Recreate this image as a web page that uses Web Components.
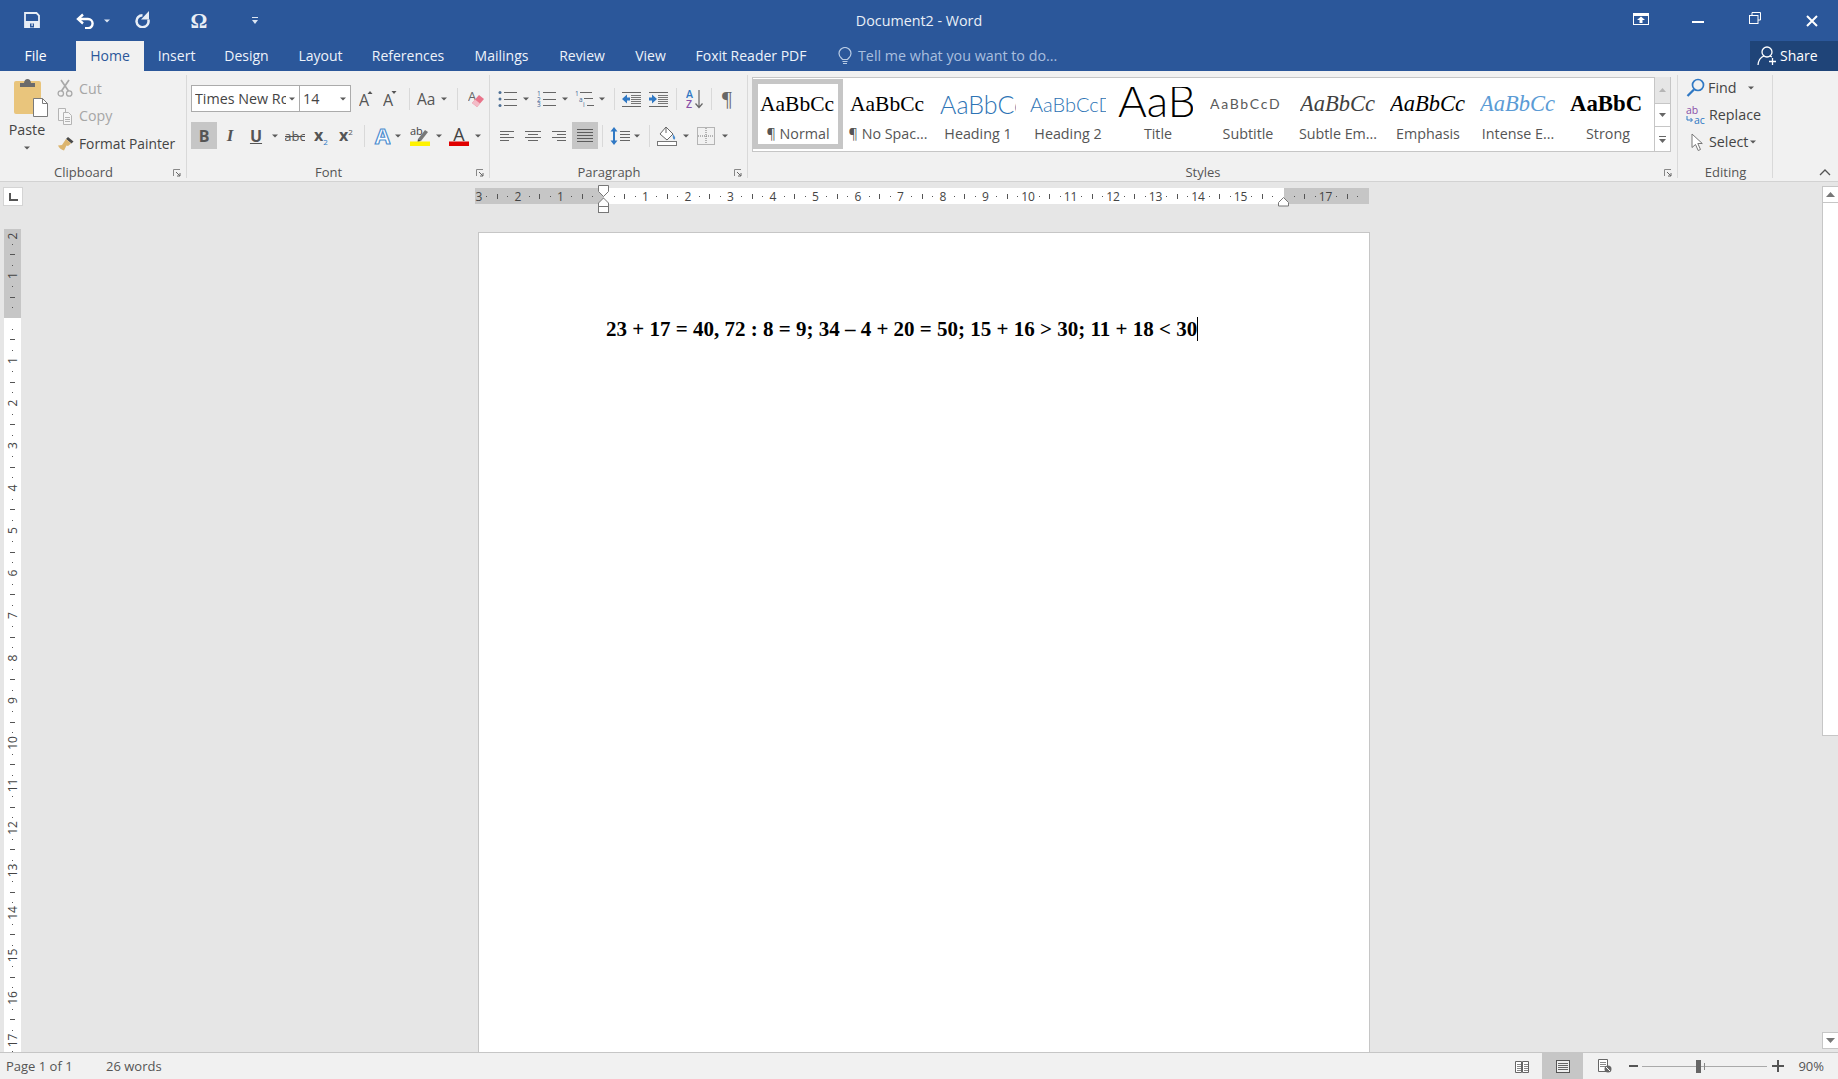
<!DOCTYPE html>
<html lang="en">
<head>
<meta charset="utf-8">
<title>Document2 - Word</title>
<style>
html, body { margin: 0; height: 100%; overflow: hidden; background: #e6e6e6; }
body { font-family: "Open Sans", "Liberation Sans", sans-serif; font-size: 13px; color: #444; }
</style>
</head>
<body>
<word-app>
  <word-titlebar slot="top"></word-titlebar>
  <word-tabs slot="top"></word-tabs>
  <word-ribbon slot="top"></word-ribbon>
  <word-workspace>
    <word-page>23 + 17 = 40, 72 : 8 = 9; 34 – 4 + 20 = 50; 15 + 16 &gt; 30; 11 + 18 &lt; 30</word-page>
  </word-workspace>
  <word-statusbar slot="bottom"></word-statusbar>
</word-app>

<script>
const SERIF = "'Liberation Serif', serif";
const SANS = "'Open Sans', 'Liberation Sans', sans-serif";
const lines = (x1, x2, ys, c) => ys.map(y => `<rect x="${x1}" y="${y}" width="${x2 - x1}" height="1" fill="${c}"/>`).join('');
const SANS_ATTR = `font-family="${SANS}"`;

// name: [width, height, svg markup], drawn 1:1 in px
const ICONS = {
  caret: [6, 4, '<path d="M0 0.5h6L3 3.5z" fill="#5a5a5a"/>'],
  caretw: [6, 4, '<path d="M0 0.5h6L3 3.5z" fill="#dce6f3"/>'],
  save: [16, 16, '<path d="M1 1h11.500L15 3.500V15H1z" fill="none" stroke="#e8eef6" stroke-width="1.800"/><rect x="1" y="9" width="14" height="6.500" fill="#e8eef6"/><rect x="6" y="11.500" width="4" height="4" fill="#2b579a"/><rect x="7.500" y="11.500" width="1.200" height="2.500" fill="#e8eef6"/>'],
  undo: [19, 16, '<path d="M7 1.500L2 6l5 4.500" fill="none" stroke="#fff" stroke-width="2.400"/><path d="M2.500 6h9.500a4.600 4.600 0 0 1 0 9.200H9" fill="none" stroke="#fff" stroke-width="2.400"/>'],
  redo: [17, 17, '<path d="M8.500 4.200a6 6 0 1 0 5.800 4.300" fill="none" stroke="#e8eef6" stroke-width="2.500"/><path d="M15 0v8.500H7z" fill="#e8eef6"/>'],
  qat: [6, 8, '<rect width="6" height="1" fill="#dce6f3"/><path d="M0 3h6L3 7z" fill="#dce6f3"/>'],
  ribbonopt: [16, 12, '<rect x=".5" y=".5" width="15" height="11" fill="none" stroke="#fff"/><rect x="1" y="1" width="14" height="2" fill="#fff"/><path d="M8 3.500l4 3.500H9.500v3h-3V7H4z" fill="#fff"/>'],
  minimize: [12, 2, '<rect width="12" height="2" fill="#fff"/>'],
  restore: [12, 12, '<path d="M3 3V.5h8.500V8H9" fill="none" stroke="#fff"/><rect x=".5" y="3.500" width="8.500" height="8" fill="none" stroke="#fff"/>'],
  close: [12, 12, '<path d="M1 1l10 10M11 1L1 11" stroke="#fff" stroke-width="2"/>'],
  bulb: [14, 18, '<path d="M4.500 12.500C3 10.500 1 9.500 1 6.500a6 6 0 0 1 12 0c0 3-2 4-3.500 6z" fill="none" stroke="#b8cbe4" stroke-width="1.200"/><path d="M4.500 14.500h5M5 16.500h4" stroke="#b8cbe4" stroke-width="1.200"/>'],
  share: [20, 20, '<circle cx="10" cy="6" r="5" fill="none" stroke="#fff" stroke-width="1.300"/><path d="M1 19c.5-5 3-8 6-9M13 10l2 1" fill="none" stroke="#fff" stroke-width="1.300"/><path d="M12 15.500h7M15.500 12v7" stroke="#fff" stroke-width="1.300"/>'],
  paste: [34, 39, '<rect y="3" width="27" height="33" rx="2" fill="#e9c57c"/><path d="M6 9V5h4q.5-4 3.500-4T17 5h4v4z" fill="#6b6b6b"/><path d="M19.500 20.500h9l5 5v13h-14z" fill="#fff" stroke="#7a7a7a"/><path d="M28.500 20.500v5h5" fill="none" stroke="#7a7a7a"/>'],
  cut: [16, 18, '<path d="M4 1l7.500 11M12 1L4.500 12" stroke="#a9a9a9" stroke-width="1.700"/><circle cx="3.800" cy="14.500" r="2.700" fill="none" stroke="#a9a9a9" stroke-width="1.300"/><circle cx="12.200" cy="14.500" r="2.700" fill="none" stroke="#a9a9a9" stroke-width="1.300"/>'],
  copy: [16, 18, '<path d="M1.500 1.500h7v12h-7z" fill="#f6f6f6" stroke="#b4b4b4"/><path d="M6.500 5.500h5l3 3v9h-8z" fill="#f6f6f6" stroke="#b4b4b4"/>' + lines(8, 13, [10, 12, 14], '#b4b4b4')],
  painter: [18, 16, '<path d="M11 2l5.500 4.500-2 2-5.500-4.500z" fill="#4a4a4a"/><path d="M9 4l5 4.500-3 2.500-1.500-.5L7 15.500C4.500 15 2 13 1 10.500l4-.5 1-1.500z" fill="#dcb56e"/>'],
  grow: [15, 17, `<text x="0" y="16" ${SANS_ATTR} font-size="16" fill="#555">A</text><path d="M8.500 4L11 1l2.500 3z" fill="#555"/>`],
  shrink: [15, 17, `<text x="0" y="16" ${SANS_ATTR} font-size="16" fill="#555">A</text><path d="M8.500 1h5L11 4z" fill="#555"/>`],
  eraser: [17, 18, `<text x="0" y="11" ${SANS_ATTR} font-size="13" fill="#666">A</text><path d="M4 13l7-8 5 4-7 8z" fill="#e9748a"/><path d="M4 13l3-3.500 5 4L9 17z" fill="#f3bcc7"/>`],
  strike: [20, 12, `<text x="10" y="11" text-anchor="middle" ${SANS_ATTR} font-size="13" fill="#555">abc</text><rect y="6" width="20" height="1" fill="#555"/>`],
  effect: [17, 20, `<text x="8.500" y="18" text-anchor="middle" ${SANS_ATTR} font-size="22" font-weight="700" fill="#fff" stroke="#4f8fd0" stroke-width="1.200">A</text>`],
  highlight: [20, 20, `<text x="0" y="9" ${SANS_ATTR} font-size="11" fill="#444">ab</text><path d="M8 13l7-9 3 2-7 9z" fill="#777"/><path d="M8 13l3 2-3.500 1z" fill="#444"/><rect y="15.500" width="20" height="4.500" fill="#fff200"/>`],
  fontcolor: [20, 20, `<text x="10" y="15" text-anchor="middle" ${SANS_ATTR} font-size="18" fill="#444">A</text><rect y="15.500" width="20" height="4.500" fill="#e00000"/>`],
  bullets: [19, 16, '<g shape-rendering="crispEdges">' + lines(6, 19, [1, 8, 14], '#666') + '</g><circle cx="2" cy="1.500" r="1.500" fill="#4f7196"/><circle cx="2" cy="8" r="1.500" fill="#4f7196"/><circle cx="2" cy="14.500" r="1.500" fill="#4f7196"/>'],
  numbering: [19, 16, `<g shape-rendering="crispEdges">${lines(6, 19, [1, 8, 14], '#666')}</g><g ${SANS_ATTR} font-size="6.500" fill="#3d6796"><text x="0" y="5">1</text><text x="0" y="11">2</text><text x="0" y="16">3</text></g>`],
  multilevel: [20, 16, `<g shape-rendering="crispEdges">${lines(5, 17, [1], '#666')}${lines(9, 18, [7], '#666')}${lines(12, 19, [14], '#666')}</g><g ${SANS_ATTR} font-size="6.500" fill="#3d6796"><text x="0" y="5">1</text><text x="4" y="11">a</text><text x="8" y="16">i</text></g>`],
  outdent: [19, 16, '<g shape-rendering="crispEdges">' + lines(0, 19, [1, 15], '#666') + lines(9, 19, [4, 6, 8, 10, 12], '#777') + '</g><path d="M0 8l5-4.500V6.500h3v3H5v3z" fill="#2f78c4"/>'],
  indent: [19, 16, '<g shape-rendering="crispEdges">' + lines(0, 19, [1, 15], '#666') + lines(9, 19, [4, 6, 8, 10, 12], '#777') + '</g><path d="M8 8L3 3.500V6.500H0v3h3v3z" fill="#2f78c4"/>'],
  sort: [17, 20, `<g ${SANS_ATTR} font-size="10.500" font-weight="600"><text x="0" y="9" fill="#2f78c4">A</text><text x="0" y="19" fill="#8a4fa8">Z</text></g><path d="M13 1v17M9.500 14.500L13 18.500l3.500-4" fill="none" stroke="#666" stroke-width="1.200"/>`],
  alignl: [14, 10, '<g shape-rendering="crispEdges">' + lines(0, 14, [0, 6], '#666') + lines(0, 9, [3, 9], '#666') + '</g>'],
  alignc: [16, 10, '<g shape-rendering="crispEdges">' + lines(0, 16, [0, 6], '#666') + lines(3, 13, [3, 9], '#666') + '</g>'],
  alignr: [14, 10, '<g shape-rendering="crispEdges">' + lines(0, 14, [0, 6], '#666') + lines(5, 14, [3, 9], '#666') + '</g>'],
  justify: [16, 13, '<g shape-rendering="crispEdges">' + lines(0, 16, [0, 3, 6, 9, 12], '#5c5c5c') + '</g>'],
  spacing: [20, 18, '<path d="M4 0l3.500 4.500H5v9h2.500L4 18 .5 13.500H3v-9H.5z" fill="#2f78c4"/><g shape-rendering="crispEdges">' + lines(10, 20, [4, 7, 10, 13], '#666') + '</g>'],
  shading: [20, 20, '<path d="M9 1l7 7-6 6-7-6z" fill="#fff" stroke="#666"/><path d="M9 1v6" stroke="#666"/><path d="M16 8c1.500 2 2.800 3.500 2 5s-3 0-2-5z" fill="#4f8fd0"/><rect x=".5" y="15.500" width="19" height="4" fill="#fff" stroke="#777"/>'],
  borders: [18, 18, '<rect x=".5" y=".5" width="17" height="17" fill="none" stroke="#777" stroke-dasharray="1 1"/><path d="M9 1v16M1 9h16" stroke="#777" stroke-dasharray="1 1"/>'],
  launcher: [8, 8, '<path d="M.5 7V.5H7" fill="none" stroke="#888"/><path d="M3 3l4 4M4 7h3V4" fill="none" stroke="#666"/>'],
  find: [19, 19, '<circle cx="12" cy="7" r="5.500" fill="none" stroke="#2f78c4" stroke-width="1.700"/><path d="M8 11.500L1.500 18" stroke="#2f78c4" stroke-width="2.300"/>'],
  replace: [21, 18, `<g ${SANS_ATTR} font-size="10.500"><text x="0" y="8" fill="#8a4fa8">ab</text><text x="8" y="17.500" fill="#2f78c4">ac</text></g><path d="M1 10v4h5M4.500 12l2 2-2 2" fill="none" stroke="#2f78c4"/>`],
  select: [12, 18, '<path d="M1 1v13.500l3.500-3 2.700 6 2.300-1-2.700-6h4.500z" fill="#fff" stroke="#777"/>'],
  collapse: [12, 7, '<path d="M1 6l5-5 5 5" fill="none" stroke="#555" stroke-width="1.300"/>'],
  sbup: [9, 5, '<path d="M0 5h9L4.500 0z" fill="#777"/>'],
  sbdown: [9, 5, '<path d="M0 0h9L4.500 5z" fill="#777"/>'],
  galleryup: [7, 4, '<path d="M0 4h7L3.500 0z" fill="#b5b5b5"/>'],
  gallerydown: [7, 4, '<path d="M0 0h7L3.500 4z" fill="#666"/>'],
  gallerymore: [7, 7, '<rect width="7" height="1" fill="#666"/><path d="M0 3h7L3.500 7z" fill="#666"/>'],
  read: [14, 13, '<path d="M.5 1.500h6v11h-6zM7.500 1.500h6v11h-6z" fill="#fff" stroke="#666"/><g shape-rendering="crispEdges">' + lines(2, 6, [4, 6, 8, 10], '#888') + lines(9, 13, [4, 6, 8, 10], '#888') + '</g>'],
  print: [14, 13, '<rect x=".5" y=".5" width="13" height="12" fill="#eee" stroke="#555"/><g shape-rendering="crispEdges">' + lines(2, 12, [3, 5, 7, 9], '#666') + '</g>'],
  web: [14, 14, '<path d="M.5.500h9v12h-9z" fill="#fff" stroke="#666"/><g shape-rendering="crispEdges">' + lines(2, 8, [3, 5, 7], '#888') + '</g><circle cx="10" cy="10" r="3.500" fill="#666"/><path d="M8 8l4 4" stroke="#fff"/>'],
  minus: [9, 2, '<rect width="9" height="2" fill="#555"/>'],
  plus: [12, 12, '<path d="M0 5h12v2H0zM5 0h2v12H5z" fill="#555"/>']
};

class WordIcon extends HTMLElement {
  connectedCallback() {
    const [w, h, body] = ICONS[this.getAttribute('name')];
    this.attachShadow({ mode: 'open' }).innerHTML = `
      <style>:host { display: inline-flex; flex: none; line-height: 0; } svg { display: block; }</style>
      <svg width="${w}" height="${h}" viewBox="0 0 ${w} ${h}">${body}</svg>`;
  }
}

class WordApp extends HTMLElement {
  connectedCallback() {
    this.attachShadow({ mode: 'open' }).innerHTML = `
      <style>
        :host { display: grid; grid-template-rows: auto 1fr auto; height: 1079px; width: 1838px; overflow: hidden; }
        .top { display: block; }
      </style>
      <div class="top"><slot name="top"></slot></div>
      <slot></slot>
      <slot name="bottom"></slot>`;
  }
}

class WordTitlebar extends HTMLElement {
  connectedCallback() {
    this.attachShadow({ mode: 'open' }).innerHTML = `
      <style>
        :host { display: grid; grid-template-columns: 1fr auto 1fr; align-items: center; height: 41px; background: #2b579a; color: #fff; }
        .qat, .win { display: flex; align-items: center; }
        .qat { padding-left: 24px; }
        .omega { font: 700 21px ${SERIF}; width: 18px; text-align: center; margin-left: 39px; line-height: 20px; color: #e8eef6; }
        .name { font-size: 14.300px; color: #e9eff7; }
        .win { justify-content: flex-end; padding-right: 20px; }
      </style>
      <div class="qat">
        <word-icon name="save" style="margin-top:-2px"></word-icon>
        <word-icon name="undo" style="margin-left:36px"></word-icon>
        <word-icon name="caretw" style="margin-left:9px"></word-icon>
        <word-icon name="redo" style="margin-left:24px;margin-top:-2px"></word-icon>
        <span class="omega">Ω</span>
        <word-icon name="qat" style="margin-left:44px"></word-icon>
      </div>
      <div class="name">Document2 - Word</div>
      <div class="win">
        <word-icon name="ribbonopt" style="margin-top:-3px"></word-icon>
        <word-icon name="minimize" style="margin-left:43px;margin-top:3px"></word-icon>
        <word-icon name="restore" style="margin-left:45px;margin-top:-5px"></word-icon>
        <word-icon name="close" style="margin-left:45px"></word-icon>
      </div>`;
  }
}

class WordTabs extends HTMLElement {
  connectedCallback() {
    this.attachShadow({ mode: 'open' }).innerHTML = `
      <style>
        :host { display: flex; height: 30px; background: #2b579a; color: #eef3fa; font-size: 14px; }
        span { display: flex; align-items: center; justify-content: center; flex: none; padding-bottom: 1px; box-sizing: border-box; }
        .file { width: 61px; margin: 0 10px 0 5px; color: #fff; }
        .home { width: 68px; background: #f1f1f1; color: #2b579a; }
        .tell { color: #a9bfdf; margin-left: 6px; font-size: 14.300px; }
        word-icon { align-self: center; margin-left: 15px; }
        .share { margin-left: auto; width: 88px; padding-left: 7px; justify-content: flex-start; background: #1f4478; color: #fff; gap: 3px; }
        .share word-icon { margin: 0; }
      </style>
      <span class="file">File</span>
      <span class="home">Home</span>
      <span style="width:65px">Insert</span>
      <span style="width:75px">Design</span>
      <span style="width:73px">Layout</span>
      <span style="width:102px">References</span>
      <span style="width:85px">Mailings</span>
      <span style="width:76px">Review</span>
      <span style="width:61px">View</span>
      <span style="width:140px">Foxit Reader PDF</span>
      <word-icon name="bulb" style="margin-left:17px"></word-icon>
      <span class="tell">Tell me what you want to do...</span>
      <span class="share"><word-icon name="share"></word-icon>Share</span>`;
  }
}

class RibbonGroup extends HTMLElement {
  connectedCallback() {
    const hasLauncher = this.hasAttribute('launcher');
    const launcher = hasLauncher ? '<word-icon class="launch" name="launcher"></word-icon>' : '';
    this.attachShadow({ mode: 'open' }).innerHTML = `
      <style>
        :host { display: flex; flex-direction: column; flex: none; position: relative; height: 111px; box-sizing: border-box; }
        :host::after { content: ""; position: absolute; right: 0; top: 4px; bottom: 4px; width: 1px; background: #d9d9d9; }
        .body { flex: 1; min-height: 0; }
        .label { height: 19px; line-height: 19px; text-align: center; font-size: 13px; color: #555; padding-right: ${hasLauncher ? 20 : 0}px; }
        .launch { position: absolute; right: 6px; bottom: 5px; }
      </style>
      <div class="body"><slot></slot></div>
      <div class="label">${this.getAttribute('label')}</div>
      ${launcher}`;
  }
}

class StyleTile extends HTMLElement {
  connectedCallback() {
    this.attachShadow({ mode: 'open' }).innerHTML = `
      <style>
        :host { display: block; flex: none; width: 90px; height: 70px; margin-top: 2px; padding-top: 8px; box-sizing: border-box; text-align: center; }
        :host([selected]) { box-shadow: inset 0 0 0 5px #c6c6c6; }
        .s { width: 76px; height: 34px; margin-left: 7px; overflow: hidden; text-align: left; white-space: nowrap; font: 21.500px/34px ${SERIF}; color: #000; }
        .l { margin-top: 3px; height: 20px; line-height: 20px; font-size: 14.300px; color: #555; white-space: nowrap; }
        :host([kind=h1]) .s { font: 300 25px/34px Lato, ${SANS}; color: #2e74b5; }
        :host([kind=h2]) .s { font: 300 20px/34px Lato, ${SANS}; color: #2e74b5; }
        :host([kind=title]) .s { font: 300 44px/27px Lato, ${SANS}; color: #000; margin-left: 5px; width: 75px; }
        :host([kind=subtitle]) .s { font: 400 14px/34px Lato, ${SANS}; color: #5a5a5a; letter-spacing: 1.700px; }
        :host([kind=subtle]) .s { font-size: 22.500px; font-style: italic; color: #404040; }
        :host([kind=em]) .s { font-size: 22.500px; font-style: italic; }
        :host([kind=intense]) .s { font-size: 22.500px; font-style: italic; color: #5b9bd5; }
        :host([kind=strong]) .s { font-size: 22.800px; font-weight: 700; }
      </style>
      <div class="s">${this.getAttribute('sample')}</div>
      <div class="l">${this.getAttribute('label')}</div>`;
  }
}

class WordRibbon extends HTMLElement {
  connectedCallback() {
    const ic = (n, ml) => `<word-icon name="${n}"${ml ? ` style="margin-left:${ml}px"` : ''}></word-icon>`;
    this.attachShadow({ mode: 'open' }).innerHTML = `
      <style>
        :host { display: flex; position: relative; height: 111px; box-sizing: border-box; background: #f1f1f1; border-bottom: 1px solid #d2d2d2; }
        .clip { display: grid; grid-template-columns: 57px 1fr; height: 91px; }
        .paste { display: flex; flex-direction: column; align-items: center; padding: 7px 0 0 4px; }
        .paste span { margin: 3px 7px 0 0; font-size: 14.300px; line-height: 20px; color: #444; }
        .paste word-icon:last-child { margin: 6px 7px 0 0; }
        .clipcol { display: grid; grid-auto-rows: 27.500px; padding-top: 3.500px; }
        .clipcol div { display: flex; align-items: center; gap: 6px; white-space: nowrap; font-size: 14.200px; }
        .off { color: #a6a6a6; }
        .rows { display: flex; flex-direction: column; gap: 10px; padding-top: 14px; }
        .row { display: flex; align-items: center; height: 27px; }
        .sep { flex: none; width: 1px; height: 22px; background: #d9d9d9; }
        .combo { flex: none; height: 27px; box-sizing: border-box; background: #fff; border: 1px solid #ababab; display: flex; align-items: center; font-size: 14.300px; color: #444; padding-left: 3px; position: relative; overflow: hidden; white-space: nowrap; }
        .combo b { font-weight: 400; overflow: hidden; flex: 1; }
        .combo word-icon { margin: 0 4px 0 3px; }
        .btn { flex: none; width: 26px; height: 27px; display: flex; align-items: center; justify-content: center; font-family: ${SANS}; font-size: 16px; color: #555; }
        .on { background: #c6c6c6; }
        .aa { flex: none; width: 19px; margin-left: -2px; font-size: 15.500px; color: #555; }
        .script { flex: none; text-align: left; font-weight: 700; font-size: 16px; line-height: 27px; color: #555; white-space: nowrap; }
        .script sub, .script sup { font-size: 8px; font-weight: 400; line-height: 0; color: #2f78c4; }
        .script sup { color: #555; }
        .gallery { display: flex; width: 919px; height: 75px; margin: 6px 0 0 4px; box-sizing: border-box; background: #fff; border: 1px solid #c6c6c6; }
        .tiles { display: flex; width: 901px; flex: none; margin-top: -1px; }
        .scroller { flex: 1; display: grid; grid-template-rows: 26px 23px 1fr; margin: -1px 0; border-left: 1px solid #c6c6c6; }
        .scroller div { display: flex; align-items: center; justify-content: center; }
        .scroller div + div { border-top: 1px solid #c6c6c6; }
        .scroller div:first-child { background: #e6e6e6; }
        .edit { display: grid; grid-auto-rows: 27px; padding: 3px 0 0 8px; font-size: 14.300px; }
        .edit div { display: flex; align-items: center; white-space: nowrap; }
        .collapse { position: absolute; right: 7px; bottom: 5px; }
      </style>

      <ribbon-group label="Clipboard" launcher style="width:187px">
        <div class="clip">
          <div class="paste"><word-icon name="paste"></word-icon><span>Paste</span><word-icon name="caret"></word-icon></div>
          <div class="clipcol">
            <div class="off"><word-icon name="cut"></word-icon>Cut</div>
            <div class="off"><word-icon name="copy"></word-icon>Copy</div>
            <div style="gap:4px;font-size:13.800px"><word-icon name="painter"></word-icon>Format Painter</div>
          </div>
        </div>
      </ribbon-group>

      <ribbon-group label="Font" launcher style="width:303px">
        <div class="rows" style="padding-left:4px">
          <div class="row">
            <div class="combo" style="width:109px"><b>Times New Roman</b><word-icon name="caret"></word-icon></div>
            <div class="combo" style="width:52px;margin-left:-1px"><b>14</b><word-icon name="caret"></word-icon></div>
            ${ic('grow', 8)}${ic('shrink', 9)}
            <span class="sep" style="margin-left:11px"></span>
            <span class="aa" style="margin-left:7px">Aa</span>${ic('caret', 5)}
            <span class="sep" style="margin-left:10px"></span>
            ${ic('eraser', 10)}
          </div>
          <div class="row">
            <span class="btn on" style="font-weight:700">B</span>
            <span class="btn" style="font:italic 700 17px ${SERIF}">I</span>
            <span class="btn" style="font-weight:700;text-decoration:underline">U</span>
            ${ic('caret', 3)}${ic('strike', 7)}
            <span class="script" style="width:14px;margin-left:9px">x<sub>2</sub></span>
            <span class="script" style="width:15px;margin-left:11px">x<sup>2</sup></span>
            <span class="sep" style="margin-left:10px"></span>
            ${ic('effect', 9)}${ic('caret', 4)}${ic('highlight', 9)}${ic('caret', 6)}${ic('fontcolor', 7)}${ic('caret', 6)}
          </div>
        </div>
      </ribbon-group>

      <ribbon-group label="Paragraph" launcher style="width:258px">
        <div class="rows">
          <div class="row">
            ${ic('bullets', 8)}${ic('caret', 6)}${ic('numbering', 8)}${ic('caret', 6)}${ic('multilevel', 7)}${ic('caret', 4)}
            <span class="sep" style="margin-left:9px"></span>
            ${ic('outdent', 7)}${ic('indent', 8)}
            <span class="sep" style="margin-left:8px"></span>
            ${ic('sort', 9)}
            <span class="sep" style="margin-left:8px"></span>
            <span class="btn" style="width:12px;margin-left:9px;font:22px ${SERIF};color:#666">¶</span>
          </div>
          <div class="row">
            ${ic('alignl', 10)}${ic('alignc', 11)}${ic('alignr', 11)}
            <span class="btn on" style="margin-left:6px"><word-icon name="justify"></word-icon></span>
            <span class="sep" style="margin-left:4px"></span>
            ${ic('spacing', 7)}${ic('caret', 4)}
            <span class="sep" style="margin-left:9px"></span>
            ${ic('shading', 7)}${ic('caret', 6)}${ic('borders', 8)}${ic('caret', 7)}
          </div>
        </div>
      </ribbon-group>

      <ribbon-group label="Styles" launcher style="width:930px">
        <div class="gallery">
          <div class="tiles">
            <style-tile selected label="¶ Normal" sample="AaBbCc"></style-tile>
            <style-tile label="¶ No Spac..." sample="AaBbCc"></style-tile>
            <style-tile kind="h1" label="Heading 1" sample="AaBbCc"></style-tile>
            <style-tile kind="h2" label="Heading 2" sample="AaBbCcD"></style-tile>
            <style-tile kind="title" label="Title" sample="AaB"></style-tile>
            <style-tile kind="subtitle" label="Subtitle" sample="AaBbCcD"></style-tile>
            <style-tile kind="subtle" label="Subtle Em..." sample="AaBbCc"></style-tile>
            <style-tile kind="em" label="Emphasis" sample="AaBbCc"></style-tile>
            <style-tile kind="intense" label="Intense E..." sample="AaBbCc"></style-tile>
            <style-tile kind="strong" label="Strong" sample="AaBbC"></style-tile>
          </div>
          <div class="scroller">
            <div><word-icon name="galleryup"></word-icon></div>
            <div><word-icon name="gallerydown"></word-icon></div>
            <div><word-icon name="gallerymore"></word-icon></div>
          </div>
        </div>
      </ribbon-group>

      <ribbon-group label="Editing" style="width:95px">
        <div class="edit">
          <div><word-icon name="find"></word-icon><span style="margin-left:3px">Find</span>${ic('caret', 11)}</div>
          <div><word-icon name="replace"></word-icon><span style="margin-left:2px">Replace</span></div>
          <div><word-icon name="select" style="margin-left:5px"></word-icon><span style="margin-left:6px">Select</span>${ic('caret', 2)}</div>
        </div>
      </ribbon-group>

      <word-icon class="collapse" name="collapse"></word-icon>`;
  }
}

class WordRuler extends HTMLElement {
  connectedCallback() {
    const vertical = this.hasAttribute('vertical');
    const cm = 42.5;
    const font = `${SANS_ATTR} font-size="12" fill="#444"`;
    let body = '';
    if (!vertical) {
      // svg x0 = 473 on the page, y0 = 183
      const zero = 130, top = 5;
      body += `<rect x="2" y="${top}" width="894" height="16" fill="#c6c6c6"/><rect x="${zero + 1}" y="${top}" width="680" height="16" fill="#fff"/>`;
      for (let q = -12; q < 72; q++) {
        const x = zero + q * cm / 4, n = q / 4;
        if (q % 4 === 0 && q !== 0) {
          if (n === 16) { continue; }
          body += `<text x="${n === -3 ? 6 : x}" y="${top + 12.5}" text-anchor="middle" ${font}>${Math.abs(n)}</text>`;
        } else if (q % 2 !== 0) {
          body += `<rect x="${Math.round(x)}" y="${top + 8}" width="1" height="1" fill="#555"/>`;
        } else if (q !== 0) {
          body += `<rect x="${Math.round(x)}" y="${top + 6}" width="1" height="5" fill="#555"/>`;
        }
      }
      body += `<path d="M${zero - 4.5} 2.500h10v6l-5 5-5-5z" fill="#fff" stroke="#777"/>
        <path d="M${zero + .5} 15l5 5v3.500h-10V20z" fill="#fff" stroke="#777"/>
        <rect x="${zero - 4.5}" y="23.500" width="10" height="6" fill="#fff" stroke="#777"/>
        <path d="M${zero + 680.5} 14.500l5 5v3.500h-10v-3.500z" fill="#fff" stroke="#777"/>`;
      this.draw(900, 32, body);
    } else {
      // svg y0 = 229 on the page, x0 = 4
      const zero = 89;
      body += `<rect width="17" height="${zero}" fill="#c6c6c6"/><rect y="${zero}" width="17" height="740" fill="#fff"/>`;
      for (let q = -8; q < 72; q++) {
        const y = zero + q * cm / 4, n = q / 4;
        if (q % 4 === 0 && q !== 0) {
          const ty = n === -2 ? 7 : y;
          body += `<text transform="translate(13 ${ty}) rotate(-90)" text-anchor="middle" ${font}>${Math.abs(n)}</text>`;
        } else if (q % 2 !== 0) {
          body += `<rect x="8" y="${Math.round(y)}" width="1" height="1" fill="#555"/>`;
        } else if (q !== 0) {
          body += `<rect x="6" y="${Math.round(y)}" width="5" height="1" fill="#555"/>`;
        }
      }
      this.draw(17, 823, body);
    }
  }
  draw(w, h, body) {
    this.attachShadow({ mode: 'open' }).innerHTML = `
      <style>:host { display: block; line-height: 0; width: ${w}px; height: ${h}px; } svg { display: block; }</style>
      <svg width="${w}" height="${h}" viewBox="0 0 ${w} ${h}">${body}</svg>`;
  }
}

class WordPage extends HTMLElement {
  connectedCallback() {
    this.attachShadow({ mode: 'open' }).innerHTML = `
      <style>
        :host { display: block; width: 892px; height: 100%; box-sizing: border-box; background: #fff; border: 1px solid #c6c6c6; border-bottom: 0; padding: 84px 0 0 127px; }
        p { margin: 0; display: inline-flex; align-items: center; height: 24px; font: 700 21px/24px ${SERIF}; color: #000; white-space: nowrap; }
        i { display: inline-block; width: 1px; height: 24px; background: #000; }
      </style>
      <p><span><slot></slot></span><i></i></p>`;
  }
}

class WordScrollbar extends HTMLElement {
  connectedCallback() {
    this.attachShadow({ mode: 'open' }).innerHTML = `
      <style>
        :host { display: flex; flex-direction: column; width: 16px; padding: 4px 0 3px; box-sizing: border-box; }
        div { box-sizing: border-box; background: #fff; border: 1px solid #c6c6c6; border-right: 0; display: flex; align-items: center; justify-content: center; }
        .b { height: 17px; flex: none; }
        .t { height: 534px; flex: none; margin-top: -1px; }
        span { flex: 1; }
      </style>
      <div class="b"><word-icon name="sbup"></word-icon></div>
      <div class="t"></div>
      <span></span>
      <div class="b"><word-icon name="sbdown"></word-icon></div>`;
  }
}

class WordWorkspace extends HTMLElement {
  connectedCallback() {
    this.attachShadow({ mode: 'open' }).innerHTML = `
      <style>
        :host { display: grid; grid-template-columns: 26px 1fr 16px; grid-template-rows: 50px 1fr; min-height: 0; background: #e6e6e6; overflow: hidden; }
        .corner { grid-area: 1 / 1; }
        .tabstop { width: 20px; height: 19px; margin: 5px 0 0 3px; box-sizing: border-box; background: #fff; border: 1px solid #d4d4d4; display: flex; align-items: center; justify-content: center; }
        .tabstop::before { content: ""; width: 7px; height: 6px; border: solid #555; border-width: 0 0 2px 2px; }
        .hr { grid-area: 1 / 2; padding: 1px 0 0 447px; overflow: hidden; }
        .vr { grid-area: 2 / 1; padding-left: 4px; margin-top: -3px; }
        .doc { grid-area: 2 / 2; display: flex; justify-content: center; min-height: 0; }
        word-scrollbar { grid-area: 1 / 3 / 3 / 4; }
      </style>
      <div class="corner"><div class="tabstop"></div></div>
      <div class="hr"><word-ruler></word-ruler></div>
      <div class="vr"><word-ruler vertical></word-ruler></div>
      <div class="doc"><slot></slot></div>
      <word-scrollbar></word-scrollbar>`;
  }
}

class WordStatusbar extends HTMLElement {
  connectedCallback() {
    this.attachShadow({ mode: 'open' }).innerHTML = `
      <style>
        :host { display: flex; align-items: center; height: 27px; box-sizing: border-box; background: #f1f1f1; border-top: 1px solid #c6c6c6; font-size: 13px; color: #555; }
        .page { margin-left: 6px; width: 100px; }
        .view { display: flex; align-items: center; justify-content: center; flex: none; height: 26px; }
        .on { background: #c6c6c6; width: 41px; margin-left: 13px; }
        .track { position: relative; flex: none; width: 125px; height: 1px; background: #aaa; margin-left: 4px; }
        .track i { position: absolute; left: 54px; top: -6px; width: 5px; height: 13px; background: #666; }
        .track u { position: absolute; left: 62px; top: -3px; width: 1px; height: 7px; background: #888; }
      </style>
      <span class="page">Page 1 of 1</span>
      <span>26 words</span>
      <word-icon name="read" style="margin-left:auto"></word-icon>
      <span class="view on"><word-icon name="print"></word-icon></span>
      <word-icon name="web" style="margin-left:15px"></word-icon>
      <word-icon name="minus" style="margin-left:17px"></word-icon>
      <span class="track"><i></i><u></u></span>
      <word-icon name="plus" style="margin-left:5px"></word-icon>
      <span style="margin:0 14px">90%</span>`;
  }
}

customElements.define('word-icon', WordIcon);
customElements.define('word-app', WordApp);
customElements.define('word-titlebar', WordTitlebar);
customElements.define('word-tabs', WordTabs);
customElements.define('ribbon-group', RibbonGroup);
customElements.define('style-tile', StyleTile);
customElements.define('word-ribbon', WordRibbon);
customElements.define('word-ruler', WordRuler);
customElements.define('word-page', WordPage);
customElements.define('word-scrollbar', WordScrollbar);
customElements.define('word-workspace', WordWorkspace);
customElements.define('word-statusbar', WordStatusbar);
</script>
</body>
</html>
